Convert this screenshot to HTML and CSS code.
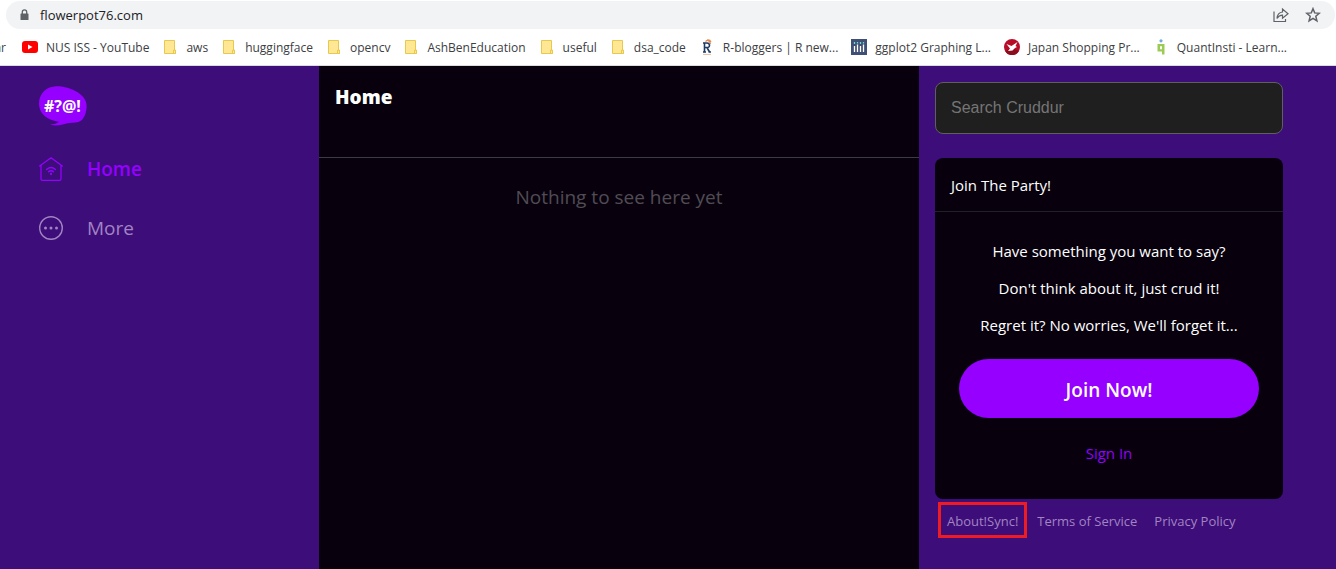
FILE: index.html
```html
<!DOCTYPE html>
<html lang="en">
<head>
<meta charset="utf-8">
<title>Cruddur</title>
<link rel="stylesheet" href="styles.css">
</head>
<body>
<svg class="defs" width="0" height="0" aria-hidden="true">
  <symbol id="folder" viewBox="0 0 12 14">
    <path d="M.5.5h10v9.7h1v3.3H.5z" fill="#ffe793" stroke="#e7c94f"/>
    <path d="M9.5 10.2h2v3.3h-2z" fill="#ffe793" stroke="#e7c94f"/>
  </symbol>
</svg>
<header class="browser">
  <div class="address">
    <svg class="lock" viewBox="0 0 9 12"><path d="M1 4.5h7q.5 0 .5.5v5.5q0 .5-.5.5H1q-.5 0-.5-.5V5q0-.5.5-.5z" fill="#5f6368"/><path d="M2.3 5V3q0-2.200 2.200-2.200T6.700 3v2" fill="none" stroke="#5f6368" stroke-width="1.300"/></svg>
    <span class="domain">flowerpot76.com</span>
    <button class="tool" aria-label="Share"><svg viewBox="0 0 16 16" fill="none" stroke="#5f6368" stroke-width="1.200"><path d="M1 4.500v10h11.500V12M4 11.500Q4.500 5.500 9.500 5V2l5.500 4.700-5.500 4.500v-3Q6 8.200 4 11.500z"/></svg></button>
    <button class="tool" aria-label="Bookmark"><svg viewBox="0 0 16 16" fill="none" stroke="#5f6368" stroke-width="1.500"><path d="M8 1.700l1.700 4.200 4.600.4-3.500 3 1.100 4.500L8 11.400l-3.900 2.400 1.100-4.500-3.500-3 4.600-.4z"/></svg></button>
  </div>
  <nav class="bookmarks" aria-label="Bookmarks">
    <a href="#" class="cut">ar</a>
    <a href="#"><svg class="favicon" viewBox="0 0 16 16"><rect y="2" width="16" height="12" rx="3" fill="#f00"/><path d="M6 5.500v5L10.500 8z" fill="#fff"/></svg><span>NUS ISS - YouTube</span></a>
    <a href="#"><svg class="folder"><use href="#folder"/></svg><span>aws</span></a>
    <a href="#"><svg class="folder"><use href="#folder"/></svg><span>huggingface</span></a>
    <a href="#"><svg class="folder"><use href="#folder"/></svg><span>opencv</span></a>
    <a href="#"><svg class="folder"><use href="#folder"/></svg><span>AshBenEducation</span></a>
    <a href="#"><svg class="folder"><use href="#folder"/></svg><span>useful</span></a>
    <a href="#"><svg class="folder"><use href="#folder"/></svg><span>dsa_code</span></a>
    <a href="#"><svg class="favicon" viewBox="0 0 16 16" fill="none"><path d="M5.500 13V4h2.500q2.500 0 2.500 2.300T8 8.500H5.500M8 8.500l2.500 4.500M4 4H6M4 13H7M9.500 13h2.500" stroke="#1d3a63" stroke-width="1.600"/><path d="M6.500 2.500Q10-.500 11.500 5M8 1q3-.5 4 2" stroke="#e58a4e" stroke-width="1.200"/><path d="M4 15.400h8" stroke="#e9b99b"/></svg><span>R-bloggers | R new...</span></a>
    <a href="#"><svg class="favicon" viewBox="0 0 16 16"><path d="M0 0h16v16H0z" fill="#3f4f75"/><path d="M3.500 7v6M6.500 5.500V13M9.500 7v6M12.500 5.500V13" stroke="#fff" stroke-width="1.300"/><path d="M3.500 3v2M6.500 3v1.500M9.500 3v2M12.500 3v1.500" stroke="#72d8cf" stroke-width="1.300"/></svg><span>ggplot2 Graphing L...</span></a>
    <a href="#"><svg class="favicon" viewBox="0 0 16 16"><circle cx="8" cy="8" r="8" fill="#b80d28"/><path d="M1 12a8 8 0 0 0 14 0Q8 8 1 12z" fill="#8c0c20"/><path d="M2.500 5l5 2L13.500 3l-2 4 1.500 1-2 1-2.500 2.500L4 12l2-2.500z" fill="#fff"/></svg><span>Japan Shopping Pr...</span></a>
    <a href="#"><svg class="favicon" viewBox="0 0 16 16"><circle cx="8" cy="1.800" r="1.600" fill="#74a9d8"/><path d="M5 5h6.500v10.500H9V12.500H4.500V5zM7 7.300v3h2V7.300z" fill="#9ccb55" fill-rule="evenodd"/></svg><span>QuantInsti - Learn...</span></a>
  </nav>
</header>
<div class="app">
  <nav class="sidebar" aria-label="Main">
    <svg class="logo" viewBox="0 0 48 40" role="img" aria-label="Cruddur"><path d="M17 .200C27-.500 46 6 47.500 18c.7 6-1.500 16-8 18-4 1.200-8 .4-11 1.300C23 39 17 40.200 11 38.700c4-.4 7-1.200 9-3C10 34.500 0 29 0 17.500 0 7 8 .500 17 .200z" fill="#9500ff"/><text x="5" y="26" font-family="Noto Sans, sans-serif" font-size="16" font-weight="700" fill="#fff">#?@!</text></svg>
    <a class="item active" href="#"><svg viewBox="0 0 24 24" fill="none" stroke="currentColor" stroke-width="1.300" stroke-linecap="round" stroke-linejoin="round"><path d="M.700 9L12 .800 23.300 9M2 8.300V22q0 1.300 1.300 1.300h17.400Q22 23.300 22 22V8.300M7.500 12.500q4.500-4 9 0M9.500 14.800q2.500-2.200 5 0"/><circle cx="12" cy="17" r=".5" fill="currentColor"/></svg>Home</a>
    <a class="item" href="#"><svg viewBox="0 0 24 24" fill="none" stroke="currentColor" stroke-width="1.400"><circle cx="12" cy="12" r="11.300"/><g fill="currentColor" stroke="none"><circle cx="6.500" cy="12" r="1.500"/><circle cx="12" cy="12" r="1.500"/><circle cx="17.500" cy="12" r="1.500"/></g></svg>More</a>
  </nav>
  <main class="feed">
    <h1 class="heading">Home</h1>
    <p class="empty">Nothing to see here yet</p>
  </main>
  <aside class="side">
    <input class="search" type="text" aria-label="Search Cruddur" placeholder="Search Cruddur">
    <section class="card">
      <h2 class="card-title">Join The Party!</h2>
      <div class="card-body">
        <p>Have something you want to say?</p>
        <p>Don't think about it, just crud it!</p>
        <p>Regret it? No worries, We'll forget it...</p>
        <button class="join">Join Now!</button>
        <a class="signin" href="#">Sign In</a>
      </div>
    </section>
    <footer class="links">
      <a class="marked" href="#">About!Sync!</a>
      <a href="#">Terms of Service</a>
      <a href="#">Privacy Policy</a>
    </footer>
  </aside>
</div>
</body>
</html>
```
FILE: styles.css
```css
* { box-sizing: border-box; }
body {
  margin: 0;
  min-height: 100vh;
  display: flex;
  flex-direction: column;
  background: #3d0d79;
  color: #fff;
  font-family: "Open Sans", "Noto Sans", sans-serif;
  font-size: 15px;
}
a { color: inherit; text-decoration: none; }
button { border: 0; font: inherit; cursor: pointer; }
h1, h2, p { margin: 0; }
.defs { position: absolute; }

.browser {
  height: 66px;
  background: #fff;
  border-bottom: 1px solid #dadce0;
  color: #3c4043;
  overflow: hidden;
}
.address {
  display: flex;
  align-items: center;
  height: 28px;
  margin: 1px 1px 0 6px;
  padding: 0 12px 0 14px;
  border-radius: 14px;
  background: #f1f3f4;
  color: #202124;
  font-size: 13px;
}
.lock { width: 9px; height: 12px; }
.domain { flex: 1; margin-left: 11px; }
.tool { display: flex; margin-left: 12px; padding: 2px; background: none; }
.tool svg { width: 16px; height: 16px; }
.bookmarks {
  display: flex;
  align-items: center;
  height: 36px;
  font-size: 12px;
  white-space: nowrap;
}
.bookmarks a { display: flex; align-items: center; gap: 8px; margin-right: 13px; }
.bookmarks .cut { width: 6px; margin-right: 16px; justify-content: flex-end; }
.favicon { width: 16px; height: 16px; flex: none; }
.folder { width: 12px; height: 14px; margin: 0 2px; flex: none; }

.app {
  flex: 1;
  display: grid;
  grid-template-columns: minmax(150px, 319px) minmax(300px, 600px) minmax(380px, 1fr);
}
.sidebar { padding: 20px 39px; }
.logo { display: block; width: 48px; height: 40px; }
.item {
  display: flex;
  align-items: center;
  gap: 24px;
  height: 27px;
  margin-top: 32px;
  color: #a184c3;
  font-size: 19px;
}
.logo + .item { margin-top: 29px; }
.item svg { width: 24px; height: 24px; }
.item.active { color: #9500ff; font-weight: 600; }

.feed { background: #08010d; }
.heading {
  height: 92px;
  padding: 18px 16px;
  border-bottom: 1px solid #3b3b44;
  font-size: 19px;
  line-height: 27px;
  font-weight: 800;
}
.empty { padding-top: 26px; color: #504c54; font-size: 19px; line-height: 27px; text-align: center; }

.side { max-width: 364px; padding: 16px 0 16px 16px; }
.search {
  width: 100%;
  height: 52px;
  padding: 0 15px;
  border: 1px solid #5f5f5f;
  border-radius: 8px;
  background: #1f1f1f;
  color: #fff;
  font-family: "Liberation Sans", sans-serif;
  font-size: 16px;
}
.search::placeholder { color: #757575; }
.card { margin-top: 24px; border-radius: 8px; background: #08010d; }
.card-title {
  padding: 17px 16px 15px;
  border-bottom: 1px solid #202028;
  font-size: 15px;
  line-height: 21px;
  font-weight: 400;
}
.card-body {
  display: flex;
  flex-direction: column;
  gap: 16px;
  padding: 29px 24px 35px;
  line-height: 21px;
  text-align: center;
}
.join {
  height: 59px;
  margin-top: 7px;
  padding: 4px 24px 0;
  border-radius: 30px;
  background: #9500ff;
  color: #fff;
  font-size: 19px;
  font-weight: 600;
}
.signin { align-self: center; margin-top: 9px; color: #9500ff; }
.links { display: flex; align-items: center; padding: 3px; color: #a184c3; font-size: 13px; white-space: nowrap; }
.links a { padding: 7px 0 5px; margin-right: 17px; line-height: 18px; }
.links .marked { padding: 7px 6px 5px; margin-right: 10px; border: 3px solid #ed1c24; }
```
